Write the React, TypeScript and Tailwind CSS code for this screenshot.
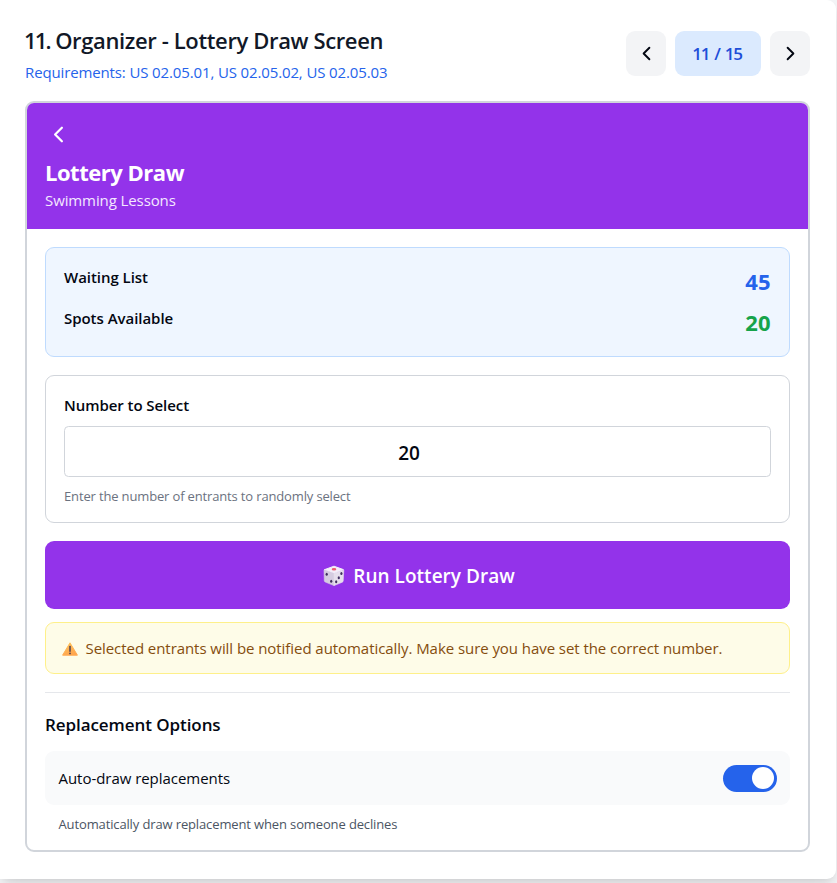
import React from "react";

function Chevron({ dir, className }: { dir: "left" | "right"; className: string }) {
  return (
    <svg viewBox="0 0 24 24" fill="none" stroke="currentColor" strokeWidth="2" strokeLinecap="round" strokeLinejoin="round" className={className}>
      <path d={dir === "left" ? "m15 18-6-6 6-6" : "m9 18 6-6-6-6"} />
    </svg>
  );
}

function Dice() {
  return (
    <svg viewBox="0 0 22 22" className="h-[22px] w-[22px] shrink-0">
      <path d="M11 1.2 20.4 4.6 11 8.6 1.2 4.8Z" fill="#f3eef8" stroke="#f3eef8" strokeWidth="1" strokeLinejoin="round" />
      <path d="M1 5 11 8.6V20.6L2.2 17Q1.4 16.6 1.3 15.8Z" fill="#d5cce0" stroke="#d5cce0" strokeWidth=".6" strokeLinejoin="round" />
      <path d="M11 8.6 20.8 5 20.2 16Q20.1 16.8 19.3 17.2L11 20.6Z" fill="#e6dfec" stroke="#e6dfec" strokeWidth=".6" strokeLinejoin="round" />
      <ellipse cx="11" cy="4.3" rx="2.3" ry="1.3" fill="#ee5a70" />
      <g fill="#40305f">
        <ellipse cx="3.7" cy="9.2" rx="1.1" ry="1.5" />
        <ellipse cx="8.2" cy="16.2" rx="1.1" ry="1.5" />
        <ellipse cx="18.4" cy="8.6" rx="1.1" ry="1.5" />
        <ellipse cx="15.8" cy="12.7" rx="1.1" ry="1.5" />
        <ellipse cx="13.2" cy="16.7" rx="1.1" ry="1.5" />
      </g>
    </svg>
  );
}

function Warning() {
  return (
    <svg viewBox="0 0 16 14" className="mt-px h-[14px] w-[16px] shrink-0">
      <defs>
        <linearGradient id="warn" x1="0" y1="0" x2="0.4" y2="1">
          <stop offset="0" stopColor="#ffc65c" />
          <stop offset="1" stopColor="#ffa64e" />
        </linearGradient>
      </defs>
      <path d="M8 .8 15.4 13.2H.6Z" fill="url(#warn)" stroke="url(#warn)" strokeWidth="1" strokeLinejoin="round" />
      <path d="M8 4.6v4.6" stroke="#4b3f52" strokeWidth="1.5" strokeLinecap="round" />
      <circle cx="8" cy="11.4" r=".9" fill="#4b3f52" />
    </svg>
  );
}

function Stat({ label, value, valueClass }: { label: string; value: string; valueClass: string }) {
  return (
    <div className="flex h-8 items-start justify-between">
      <span className="text-[15px] leading-[24px] font-semibold tracking-[-0.04px]">{label}</span>
      <span className={`text-[22px] leading-[32px] font-bold tracking-[0.3px] ${valueClass}`}>{value}</span>
    </div>
  );
}

export default function App() {
  return (
    <div className="h-[883px] overflow-hidden bg-[#f3f4f6] font-['Open_Sans','Noto_Sans',sans-serif] whitespace-nowrap text-[#030712]">
      <main className="h-[879px] w-[836px] rounded-r-[9px] bg-white pt-[27px] pr-[26px] pl-[25px] shadow-[0_11px_17px_-3px_rgba(0,0,0,0.1),0_4px_7px_-4px_rgba(0,0,0,0.1)]">
        <header className="flex h-[74px] items-start justify-between">
          <div>
            <h1 className="h-[27px] text-[22px] leading-[27px] font-semibold tracking-[-0.37px] text-[#111827]">
              <span className="-ml-px tracking-[-1.8px]">11.</span> Organizer - Lottery Draw Screen
            </h1>
            <p className="mt-[7px] text-[15px] leading-[23px] tracking-[-0.13px] text-[#2563eb]">Requirements: US 02.05.01, US 02.05.02, US 02.05.03</p>
          </div>
          <div className="mt-1 flex h-[45px] gap-[9px]">
            <button className="flex w-10 items-center justify-center rounded-[9px] bg-[#f3f4f6]">
              <Chevron dir="left" className="h-[23px] w-[23px]" />
            </button>
            <div className="flex w-[86px] items-center justify-center rounded-[9px] bg-[#dbeafe] pr-[2px] text-[17px] font-semibold tracking-[-1.2px] [word-spacing:1.8px] text-[#1d4ed8]">11 / 15</div>
            <button className="flex w-10 items-center justify-center rounded-[9px] bg-[#f3f4f6]">
              <Chevron dir="right" className="h-[23px] w-[23px]" />
            </button>
          </div>
        </header>

        <section className="h-[751px] overflow-hidden rounded-[9px] border-2 border-[#d1d5db]">
          <div className="h-[126px] bg-[#9333ea] px-[18px] pt-[18px] text-white">
            <button className="flex h-[27px] w-[27px] items-center justify-center">
              <Chevron dir="left" className="h-[27px] w-[27px]" />
            </button>
            <h2 className="mt-[9px] text-[22px] leading-[30px] font-bold tracking-[-0.48px]">Lottery Draw</h2>
            <p className="mt-px text-[15px] leading-[24px] tracking-[-0.1px] text-[#f3e8ff]">Swimming Lessons</p>
          </div>

          <div className="px-[18px] pt-[18px]">
            <div className="flex h-[110px] flex-col gap-[9px] rounded-[9px] border border-[#bfdbfe] bg-[#eff6ff] px-[18px] pt-[17px]">
              <Stat label="Waiting List" value="45" valueClass="text-[#2563eb]" />
              <Stat label="Spots Available" value="20" valueClass="text-[#16a34a]" />
            </div>

            <div className="mt-[18px] h-[148px] rounded-[9px] border border-[#d1d5db] px-[18px] pt-[17px]">
              <label className="block text-[15px] leading-[24px] font-semibold tracking-[-0.06px]">Number to Select</label>
              <div className="mt-[9px] flex h-[51px] items-center justify-center rounded-[4.5px] border border-[#d1d5db] pt-1 pr-[17px] text-[19px] font-semibold">20</div>
              <p className="mt-[9px] text-[13px] leading-5 tracking-[-0.15px] text-[#6b7280]">Enter the number of entrants to randomly select</p>
            </div>

            <button className="mt-[18px] flex h-[68px] w-full items-center justify-center gap-2 rounded-[9px] bg-[#9333ea] pt-[2px] pl-[3px] text-[19px] font-semibold text-white">
              <Dice />
              <span className="tracking-[0.02px]">Run Lottery Draw</span>
            </button>

            <div className="mt-[13px] flex h-[52px] items-center gap-[7.5px] rounded-[9px] border border-[#fef08a] bg-[#fefce8] pl-4 text-[15px] text-[#854d0e]">
              <Warning />
              <span className="tracking-[-0.06px]">Selected entrants will be notified automatically. Make sure you have set the correct number.</span>
            </div>

            <div className="mt-[18px] border-t border-[#e5e7eb] pt-[18px]">
              <h3 className="text-[17px] leading-[27px] font-semibold tracking-[-0.07px]">Replacement Options</h3>
              <div className="mt-[13px] flex h-[54px] items-center justify-between rounded-[9px] bg-[#f9fafb] pr-[13px] pl-[13.5px]">
                <span className="text-[15px] tracking-[-0.04px]">Auto-draw replacements</span>
                <div className="flex h-[27px] w-[54px] items-center justify-end rounded-full bg-[#2563eb] pr-[3px]">
                  <div className="h-[22px] w-[22px] rounded-full bg-white" />
                </div>
              </div>
              <p className="mt-[9px] pl-[13.5px] text-[13px] leading-5 tracking-[-0.13px] text-[#4b5563]">Automatically draw replacement when someone declines</p>
            </div>
          </div>
        </section>
      </main>
    </div>
  );
}
